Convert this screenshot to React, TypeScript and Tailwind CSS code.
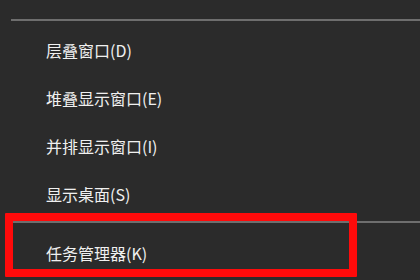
import React from "react";

const items = ["层叠窗口(D)", "堆叠显示窗口(E)", "并排显示窗口(I)", "显示桌面(S)"];

export default function App() {
  return (
    <div
      className="relative w-[420px] h-[280px] overflow-hidden bg-[#2b2b2b] text-[#f0f0f0]"
      style={{ fontFamily: '"Noto Sans CJK SC", "Noto Sans", sans-serif' }}
    >
      <div className="h-[19px]" />
      <div className="ml-[11px] h-[2px] bg-[#6e6e6e]" />
      <div className="flex flex-col pt-[5px]">
        {items.map((t) => (
          <div key={t} className="h-[48px] flex items-center pl-[46px] text-[16px] leading-none">
            {t}
          </div>
        ))}
      </div>
      <div className="mt-[3px] ml-[11px] h-[2px] bg-[#6e6e6e]" />
      <div className="h-[56px] flex items-center pl-[46px] text-[16px] leading-none pt-[4px]">
        任务管理器(K)
      </div>
      <div className="absolute left-[5px] top-[213px] w-[352px] h-[64px] border-[8px] border-[#ff0a0a] rounded-[1px]" />
    </div>
  );
}
